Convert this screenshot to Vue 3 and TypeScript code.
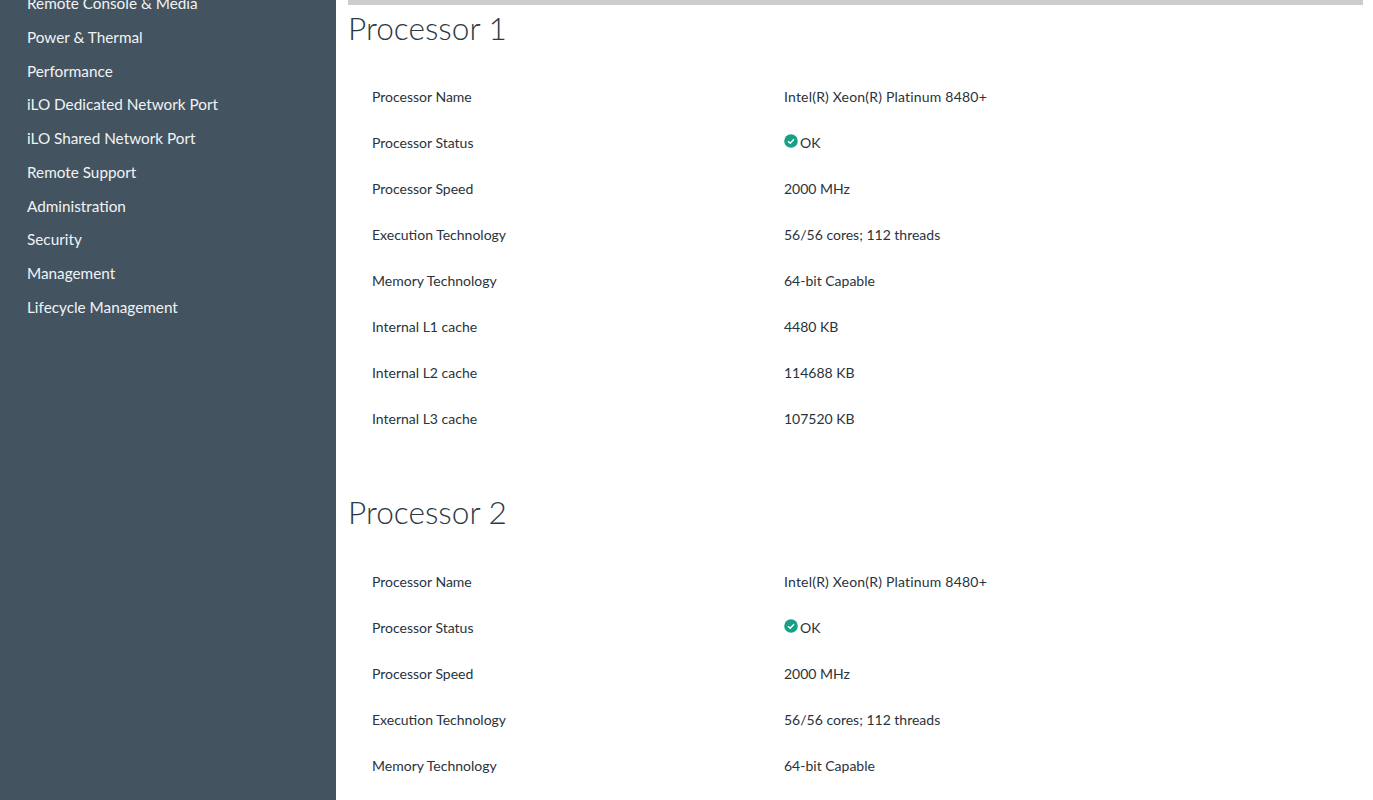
<script setup lang="ts">
const nav: string[] = ['Remote Console & Media','Power & Thermal','Performance','iLO Dedicated Network Port','iLO Shared Network Port','Remote Support','Administration','Security','Management','Lifecycle Management']
interface Row { label: string; value: string; ok?: boolean }
const rows: Row[] = [
  { label: 'Processor Name', value: 'Intel(R) Xeon(R) Platinum 8480+' },
  { label: 'Processor Status', value: 'OK', ok: true },
  { label: 'Processor Speed', value: '2000 MHz' },
  { label: 'Execution Technology', value: '56/56 cores; 112 threads' },
  { label: 'Memory Technology', value: '64-bit Capable' },
  { label: 'Internal L1 cache', value: '4480 KB' },
  { label: 'Internal L2 cache', value: '114688 KB' },
  { label: 'Internal L3 cache', value: '107520 KB' },
]
const processors = [
  { name: 'Processor 1', rows },
  { name: 'Processor 2', rows: rows.slice(0, 5) },
]
</script>

<template>
  <div class="page">
    <nav class="side">
      <a v-for="n in nav" :key="n" class="item">{{ n }}</a>
    </nav>
    <main class="content">
      <div class="bar"></div>
      <section v-for="p in processors" :key="p.name" class="proc">
        <h2>{{ p.name }}</h2>
        <div class="rows">
          <div v-for="r in p.rows" :key="r.label" class="row">
            <div class="label">{{ r.label }}</div>
            <div class="value">
              <svg v-if="r.ok" class="ok" viewBox="0 0 14 14" width="14" height="14">
                <circle cx="7" cy="7" r="6.8" fill="#16a085" />
                <path d="M4 7.2 L6.2 9.3 L10 5.2" fill="none" stroke="#fff" stroke-width="1.5" />
              </svg>
              <span>{{ r.value }}</span>
            </div>
          </div>
        </div>
      </section>
    </main>
  </div>
</template>

<style>
html, body { margin: 0; height: 100%; overflow: hidden; background: #fff; }
</style>

<style scoped>
.page { display: flex; height: 800px; overflow: hidden; font-family: "Lato", "Open Sans", sans-serif; }
.side { width: 336px; flex: none; background: #445360; box-sizing: border-box; padding: 0 0 0 27px; display: flex; flex-direction: column; }
.item { display: block; height: 33.78px; line-height: 33.78px; font-size: 15.3px; color: #f0f3f5; margin: 0; white-space: nowrap; }
.item:first-child { margin-top: -13px; }
.content { flex: 1; padding: 0 10px 0 12px; min-width: 0; }
.bar { height: 5px; background: #ccc; }
.proc { padding-bottom: 48px; }
h2 { margin: 0; height: 50px; line-height: 46px; font-size: 31.6px; font-weight: 300; color: #2b3a45; }
.rows { padding: 18px 0 0 24px; }
.proc + .proc .rows { padding-top: 19px; }
.row { display: flex; height: 46px; align-items: center; font-size: 14px; color: #29333c; }
.row:first-child .value { letter-spacing: 0.2px; }
.label { width: 412px; flex: none; }
.value { display: flex; align-items: center; gap: 2px; }
.ok { margin-top: -3px; }
</style>
